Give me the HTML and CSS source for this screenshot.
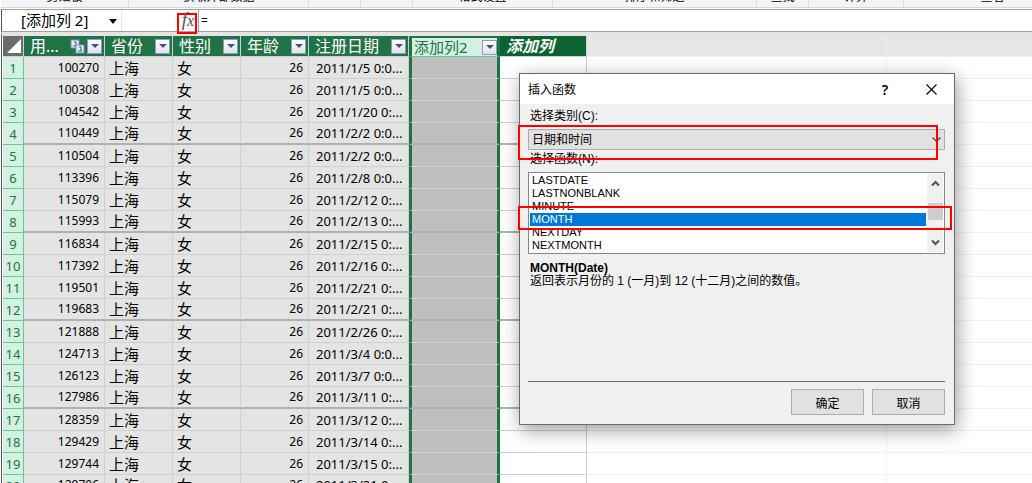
FILE: index.html
```
<!DOCTYPE html>
<html lang="zh-CN">
<head>
    <meta charset="UTF-8">
    <meta name="viewport" content="width=device-width, initial-scale=1.0">
    <title>Power Pivot</title>
    <link rel="stylesheet" href="styles.css">
</head>
<body>
    <div class="app">
        <div class="ribbon">
            <span class="group clipboard">剪贴板</span>
            <span class="group external">获取外部数据</span>
            <span class="group small"></span>
            <span class="group small"></span>
            <span class="group format">格式设置</span>
            <span class="group sort">排序和筛选</span>
            <span class="group small">查找</span>
            <span class="group calc">计算</span>
            <span class="group view">查看</span>
        </div>

        <div class="formula-bar">
            <div class="name-box">
                <select aria-label="名称框"><option>[添加列 2]</option></select>
                <svg class="name-arrow" width="8" height="5" viewBox="0 0 8 5"><path d="M0 0h8L4 5z" fill="#000"/></svg>
            </div>
            <div class="fx-area"><button class="fx" aria-label="插入函数">f<span>x</span></button></div>
            <input class="formula" aria-label="公式" value="=">
        </div>

        <table class="grid">
            <colgroup>
                <col class="c-num"><col class="c-user"><col class="c-text"><col class="c-text"><col class="c-text"><col class="c-date"><col class="c-sel"><col class="c-add"><col class="c-empty"><col>
            </colgroup>
            <thead>
                <tr>
                    <th class="corner"><svg width="14" height="14" viewBox="0 0 14 14"><path d="M14 0v14H0z" fill="#fff"/></svg></th>
                    <th><div class="head">用...
                        <svg class="link" width="15" height="15" viewBox="0 0 15 15">
                            <rect x="1" y="1" width="8" height="8" fill="#e8ecf6" stroke="#7d8fb8"/>
                            <path d="M4 3h2v4M3 7h4" fill="none" stroke="#3b508c"/>
                            <rect x="6" y="6" width="8" height="8" fill="#e8ecf6" stroke="#7d8fb8"/>
                            <path d="M9 8h2v4M8 12h4" fill="none" stroke="#3b508c"/>
                        </svg>
                        <button class="filter" aria-label="筛选"></button></div></th>
                    <th><div class="head">省份<button class="filter" aria-label="筛选"></button></div></th>
                    <th><div class="head">性别<button class="filter" aria-label="筛选"></button></div></th>
                    <th><div class="head">年龄<button class="filter" aria-label="筛选"></button></div></th>
                    <th><div class="head">注册日期<button class="filter" aria-label="筛选"></button></div></th>
                    <th class="selected"><div class="head">添加列2<button class="filter" aria-label="筛选"></button></div></th>
                    <th class="add"><div class="head">添加列</div></th>
                    <th class="blank"></th>
                    <th class="blank"></th>
                </tr>
            </thead>
            <tbody id="rows"></tbody>
        </table>

        <div class="dialog" role="dialog" aria-labelledby="dialog-title">
            <div class="title-bar">
                <span id="dialog-title">插入函数</span>
                <button class="help" aria-label="帮助">?</button>
                <button class="close" aria-label="关闭"><svg width="11" height="11" viewBox="0 0 11 11"><path d="M.5.5l10 10M10.500.5l-10 10" stroke="#000" stroke-width="1.100"/></svg></button>
            </div>
            <div class="dialog-body">
                <label for="category">选择类别(C):</label>
                <div class="combo">
                    <select id="category"><option>日期和时间</option></select>
                    <svg width="9" height="6" viewBox="0 0 9 6"><path d="M.5.5l4 4 4-4" fill="none" stroke="#444" stroke-width="1.200"/></svg>
                </div>
                <label for="functions">选择函数(N):</label>
                <div class="list-box">
                    <select id="functions" size="6">
                        <option>LASTDATE</option>
                        <option>LASTNONBLANK</option>
                        <option>MINUTE</option>
                        <option selected>MONTH</option>
                        <option>NEXTDAY</option>
                        <option>NEXTMONTH</option>
                    </select>
                    <div class="scrollbar">
                        <svg width="9" height="7" viewBox="0 0 9 7"><path d="M1 5.500l3.500-3.500L8 5.500" fill="none" stroke="#505050" stroke-width="2"/></svg>
                        <div class="thumb"></div>
                        <svg width="9" height="7" viewBox="0 0 9 7"><path d="M1 1.500l3.500 3.500L8 1.500" fill="none" stroke="#505050" stroke-width="2"/></svg>
                    </div>
                </div>
                <div class="description">
                    <strong>MONTH(Date)</strong>
                    <p>返回表示月份的 1 (一月)到 12 (十二月)之间的数值。</p>
                </div>
                <div class="actions">
                    <button>确定</button>
                    <button>取消</button>
                </div>
            </div>
        </div>

        <div class="mark mark-fx"></div>
        <div class="mark mark-category"></div>
        <div class="mark mark-function"></div>
    </div>
    <script>
        const records = [
            ['100270', '2011/1/5 0:0...'],
            ['100308', '2011/1/5 0:0...'],
            ['104542', '2011/1/20 0:...'],
            ['110449', '2011/2/2 0:0...'],
            ['110504', '2011/2/2 0:0...'],
            ['113396', '2011/2/8 0:0...'],
            ['115079', '2011/2/12 0:...'],
            ['115993', '2011/2/13 0:...'],
            ['116834', '2011/2/15 0:...'],
            ['117392', '2011/2/16 0:...'],
            ['119501', '2011/2/21 0:...'],
            ['119683', '2011/2/21 0:...'],
            ['121888', '2011/2/26 0:...'],
            ['124713', '2011/3/4 0:0...'],
            ['126123', '2011/3/7 0:0...'],
            ['127986', '2011/3/11 0:...'],
            ['128359', '2011/3/12 0:...'],
            ['129429', '2011/3/14 0:...'],
            ['129744', '2011/3/15 0:...'],
            ['129796', '2011/3/21 0:...'],
        ];

        document.getElementById('rows').innerHTML = records.map(([user, date], i) => `
            <tr>
                <th>${i + 1}</th>
                <td class="number">${user}</td>
                <td class="cjk">上海</td>
                <td class="cjk">女</td>
                <td class="number">26</td>
                <td class="date">${date}</td>
                <td class="selected"></td>
                <td class="add"></td>
                <td class="blank"></td>
                <td class="blank"></td>
            </tr>`).join('');
    </script>
</body>
</html>
```
FILE: styles.css
```
* {
    box-sizing: border-box;
}

body {
    margin: 0;
    font-family: 'Noto Sans', 'Noto Sans CJK SC', sans-serif;
    font-size: 12px;
    color: #000;
    background: #fff;
}

button,
select,
input {
    margin: 0;
    padding: 0;
    border: none;
    border-radius: 0;
    font: inherit;
    color: inherit;
    background: none;
    appearance: none;
    outline: none;
}

.app {
    position: relative;
    height: 100vh;
    overflow: hidden;
    border-left: 1px solid #fff;
    background: #fff;
}

.ribbon {
    display: flex;
    align-items: flex-end;
    height: 8px;
    overflow: hidden;
    background: #f4f5f8;
    border-bottom: 1px solid #d8d8d8;
}

.group {
    flex: none;
    height: 17px;
    border-right: 1px solid #dcdde0;
    line-height: 14px;
    text-align: center;
}

.clipboard { width: 128px; }
.external { width: 180px; }
.small { width: 52px; }
.format { width: 140px; }
.sort { width: 204px; }
.calc { width: 95px; }
.view { flex: 1 0 178px; }

.formula-bar {
    display: flex;
    height: 23px;
    margin-top: 1px;
    border: 1px solid #a0a0a0;
    border-left-color: #555;
    border-right: none;
}

.name-box {
    position: relative;
    width: 120px;
    border-right: 1px solid #e4e4e4;
}

.name-box select {
    width: 100%;
    height: 20px;
    padding-left: 19px;
    font-size: 15px;
    line-height: 20px;
}

.name-arrow {
    position: absolute;
    right: 4px;
    top: 9px;
}

.fx-area {
    display: flex;
    justify-content: flex-end;
    width: 77px;
    border-right: 1px solid #a0a0a0;
}

.fx {
    width: 20px;
    font: italic 19px/20px 'Liberation Serif', serif;
    color: #555;
}

.fx span {
    font-size: 16px;
}

.formula {
    flex: 1;
    padding-left: 2px;
}

.grid {
    width: 100%;
    padding-left: 1px;
    border-collapse: separate;
    border-spacing: 0;
    table-layout: fixed;
    border-top: 4px solid #e4e4e4;
    border-left: 1px solid #555;
}

.c-num { width: 21px; }
.c-user { width: 81px; }
.c-text { width: 68px; }
.c-date { width: 100px; }
.c-sel { width: 91px; }
.c-add { width: 87px; }
.c-empty { width: 300px; }

.grid th,
.grid td {
    height: 22px;
    padding: 0;
    overflow: hidden;
    white-space: nowrap;
    font-weight: normal;
    line-height: 20px;
    border-right: 1px solid #d0d0d0;
    border-bottom: 1px solid #d0d0d0;
    background: #e4e4e4;
}

.grid thead th {
    height: 21px;
    background: #217346;
    color: #fff;
    font-size: 16px;
}

.grid thead .corner {
    background: #6b6b6b;
    text-align: right;
    padding-right: 2px;
}

.corner svg {
    display: block;
    margin-left: auto;
}

.head {
    display: flex;
    align-items: center;
    height: 20px;
    padding: 0 2px 0 6px;
    line-height: 18px;
}

.link {
    margin-left: auto;
    margin-right: 2px;
}

.filter {
    display: flex;
    align-items: center;
    justify-content: center;
    width: 15px;
    height: 15px;
    margin-left: auto;
    border: 1px solid #8c9cc8;
    background: linear-gradient(#fff, #dfe1e8);
}

.link + .filter {
    margin-left: 0;
}

.filter::after {
    content: '';
    border: 4px solid transparent;
    border-top-color: #44547f;
    border-bottom: none;
}

.grid tbody th {
    background: #d4f0e2;
    border-color: #62c993;
    color: #217346;
    font-size: 13px;
}

.grid .number {
    padding-right: 5px;
    text-align: right;
}

.grid .cjk {
    padding-left: 4px;
    font-size: 15px;
}

.grid .date {
    padding-left: 7px;
    font-size: 13px;
}

.grid .selected {
    background: #bfbfbf;
    border-left: 3px solid #217346;
    border-right: 3px solid #217346;
}

.grid thead .selected {
    border-top: 2px solid #217346;
    border-bottom-color: #62c993;
    background: #d4f0e2;
    color: #217346;
    font-size: 15px;
}

.selected .head {
    height: 18px;
    padding: 0 0 0 2px;
}

.grid thead .add {
    background: #0b6430;
    font-style: italic;
    font-weight: bold;
}

.grid td.add {
    background: #fff;
}

.grid .blank,
.grid thead .blank {
    background: #fff;
    border-color: #f1f1f1;
}

.grid thead .blank {
    background: #e6e6e6;
}

.grid .blank:last-child {
    border-right: none;
}

.grid tbody tr:nth-child(4n) td:not(.blank) {
    border-bottom: 2px solid #b0b0b0;
}

.dialog {
    position: absolute;
    left: 518px;
    top: 73px;
    width: 436px;
    border: 1px solid #6b6b6b;
    background: #f0f0f0;
    box-shadow: 2px 5px 18px rgba(0, 0, 0, 0.4);
}

.title-bar {
    display: flex;
    align-items: center;
    height: 30px;
    padding-left: 8px;
    background: #fff;
}

.title-bar span {
    flex: 1;
}

.title-bar button {
    display: flex;
    align-items: center;
    justify-content: center;
    width: 46px;
    height: 30px;
    font-size: 14px;
    font-weight: 600;
}

.dialog-body {
    display: flex;
    flex-direction: column;
    padding: 3px 9px 9px 8px;
    font-family: 'Liberation Sans', 'Noto Sans CJK SC', sans-serif;
}

.dialog-body label {
    height: 22px;
    padding-left: 2px;
    line-height: 18px;
}

.combo {
    position: relative;
    height: 21px;
}

.combo select {
    width: 100%;
    height: 21px;
    padding-left: 3px;
    border: 1px solid #adadad;
    background: #e1e1e1;
}

.combo svg {
    position: absolute;
    right: 4px;
    top: 8px;
}

.list-box {
    display: flex;
    height: 82px;
    padding: 1px;
    border: 1px solid #828790;
    background: #fff;
    font-size: 11px;
}

.list-box select {
    flex: 1;
    height: 78px;
    overflow: hidden;
}

.list-box option {
    height: 13px;
    min-height: 13px;
    padding: 0 2px;
    line-height: 13px;
}

.list-box option:checked {
    background: linear-gradient(#0078d7, #0078d7);
    color: #fff;
    -webkit-text-fill-color: #fff;
}

.scrollbar {
    display: flex;
    flex-direction: column;
    align-items: center;
    justify-content: space-between;
    width: 16px;
    margin-left: 1px;
    padding: 6px 0;
    background: #f0f0f0;
}

.thumb {
    width: 15px;
    height: 17px;
    margin-bottom: 3px;
    background: #cdcdcd;
}

.description {
    height: 128px;
    padding: 8px 2px 0;
    border-bottom: 1px solid #6b6b6b;
    line-height: 13px;
}

.description strong {
    display: block;
}

.description p {
    margin: 0;
}

.actions {
    display: flex;
    justify-content: flex-end;
    gap: 8px;
    padding-top: 7px;
}

.actions button {
    width: 73px;
    height: 26px;
    border: 1px solid #adadad;
    background: #e1e1e1;
}

/* red call-outs over the window */
.mark {
    position: absolute;
    border: 2px solid #f00;
    pointer-events: none;
}

.mark-fx {
    left: 176px;
    top: 13px;
    width: 20px;
    height: 21px;
}

.mark-category {
    left: 517px;
    top: 125px;
    width: 420px;
    height: 35px;
}

.mark-function {
    left: 517px;
    top: 206px;
    width: 434px;
    height: 24px;
}
```
